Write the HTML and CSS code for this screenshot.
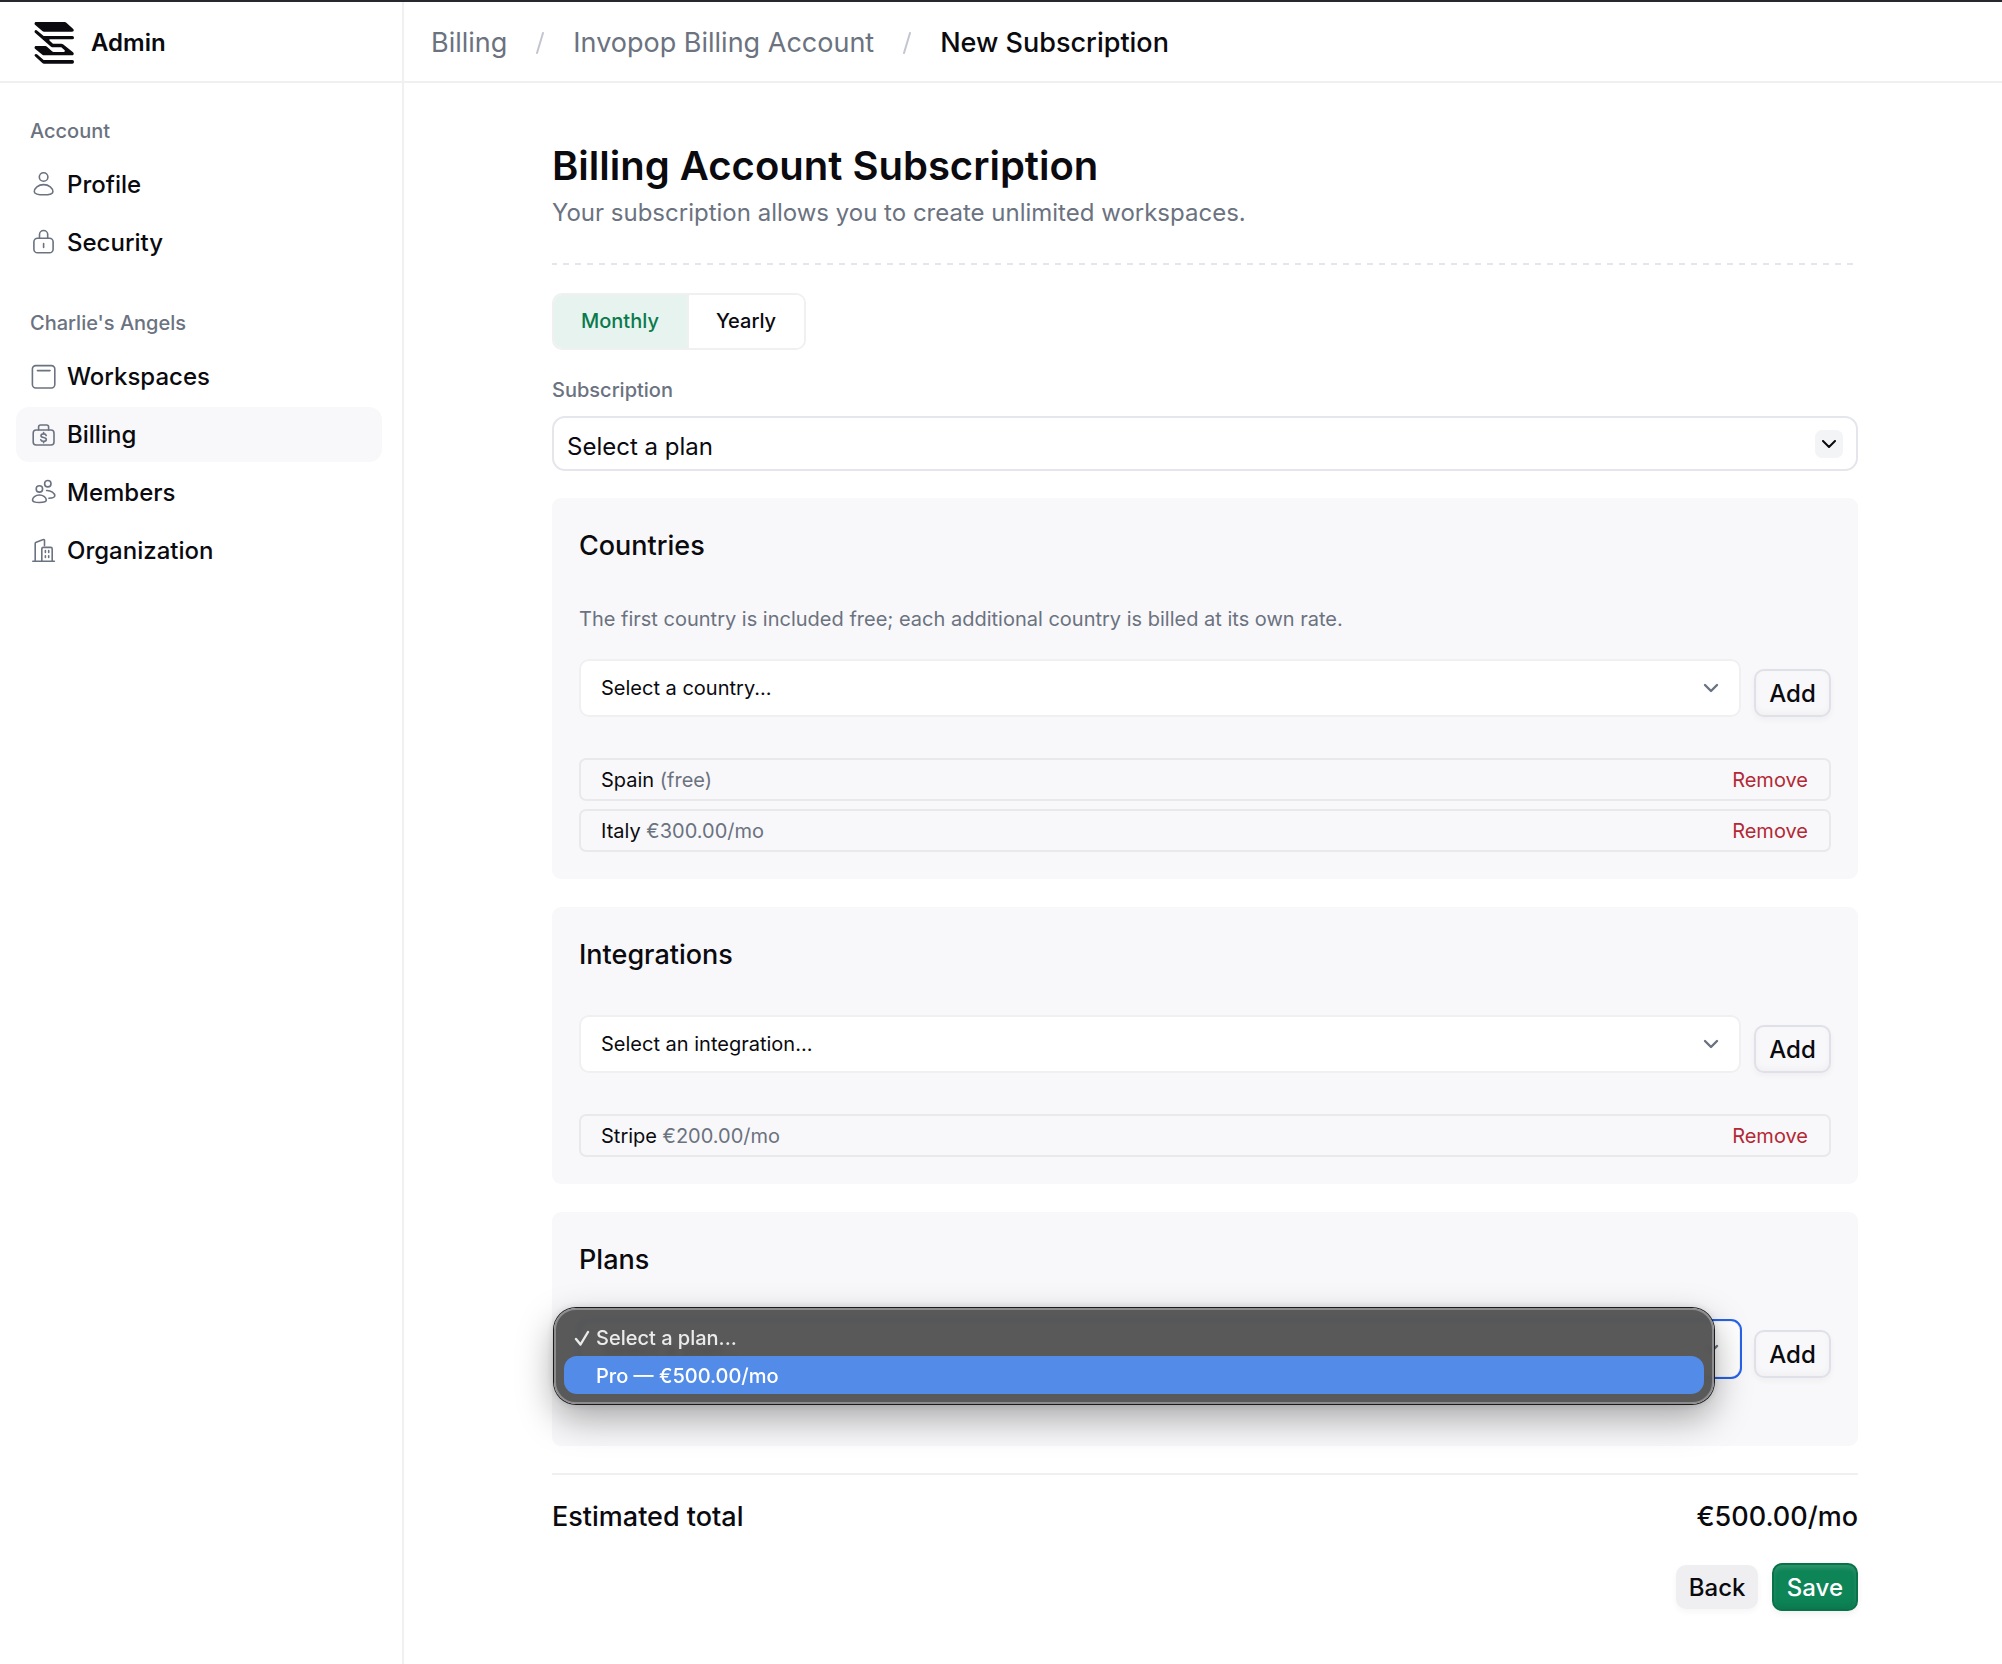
FILE: index.html
```html
<!DOCTYPE html>
<html lang="en">
<head>
<meta charset="utf-8">
<meta name="viewport" content="width=device-width, initial-scale=1">
<title>New Subscription</title>
<link rel="stylesheet" href="styles.css">
</head>
<body>
<div class="app">
  <aside class="sidebar">
    <div class="brand">
      <svg class="brand-logo" viewBox="102 60 120 129" aria-hidden="true">
        <path d="M107 63H194Q197 63 199 65L219 83Q223 87 220 91Q219 92 216 92H132Q129 92 127 90L105 71Q103 69 104 66Q105 63 107 63Z"/>
        <path d="M104 90Q106 86 110 88L131 105H217Q222 105 222 110Q222 115 217 115H149Q147 117 149 119L159 128H184Q187 128 189 130L219 154Q223 158 220 161Q219 163 216 163H132Q129 163 127 161L105 143Q103 141 104 138Q105 135 107 135H136Q139 135 141 137L156 151Q158 153 161 153H192Q196 152 194 148L184 139H160Q156 139 153 137L105 95Q103 93 104 90Z"/>
        <path d="M104 161Q107 157 111 160L131 177H217Q222 177 222 182Q222 188 217 188H132Q129 188 127 186L105 166Q103 164 104 161Z"/>
      </svg>
      <span class="brand-name">Admin</span>
    </div>
    <nav class="nav" aria-label="Main">
      <section class="nav-group">
        <h2 class="nav-label">Account</h2>
        <a class="nav-item" href="#profile">
          <svg class="icon" viewBox="0 0 27 27" aria-hidden="true"><circle cx="13.6" cy="6" r="4.3"/><path d="M13.6 13.6c5.4 0 9.3 3.7 9.3 7.1 0 2-3.7 3.1-9.3 3.1s-9.3-1.1-9.3-3.1c0-3.4 3.9-7.1 9.3-7.1z"/></svg>
          Profile
        </a>
        <a class="nav-item" href="#security">
          <svg class="icon" viewBox="0 0 27 27" aria-hidden="true"><rect x="3.9" y="9.2" width="19.2" height="14.6" rx="3.6"/><path d="M9.5 9.2V5.6a4.1 4.1 0 0 1 8.2 0v3.6M13.6 14.6v3.8"/></svg>
          Security
        </a>
      </section>
      <section class="nav-group">
        <h2 class="nav-label">Charlie's Angels</h2>
        <a class="nav-item" href="#workspaces">
          <svg class="icon" viewBox="0 0 27 27" aria-hidden="true"><rect x="2.4" y="2.6" width="22.4" height="22.4" rx="3.4"/><path d="M7.4 7.6h12.6"/></svg>
          Workspaces
        </a>
        <a class="nav-item nav-item-active" href="#billing" aria-current="page">
          <svg class="icon" viewBox="0 0 27 27" aria-hidden="true"><rect x="3.2" y="9" width="20.8" height="15" rx="3"/><path d="M8.6 9V6a2 2 0 0 1 2-2h6a2 2 0 0 1 2 2v3"/><path d="M16.2 14.4c-.3-1-1.3-1.5-2.6-1.5-1.5 0-2.6.6-2.6 1.8 0 2.6 5.3 1.1 5.3 3.8 0 1.2-1.2 1.8-2.7 1.8-1.4 0-2.5-.6-2.8-1.6M13.6 11.5v1.4M13.6 20.3v1.4"/></svg>
          Billing
        </a>
        <a class="nav-item" href="#members">
          <svg class="icon" viewBox="0 0 27 27" aria-hidden="true"><circle cx="9.4" cy="9.9" r="3.2"/><circle cx="17.8" cy="4.7" r="3.2"/><path d="M9.4 16c4 0 6.9 2.5 6.9 5 0 1.7-2.7 2.5-6.9 2.5s-6.9-.8-6.9-2.5c0-2.5 2.9-5 6.9-5zM16.6 11.5c4.6-.2 8.2 2.900 8.200 5.300 0 1.400-2.100 2.300-5.900 2.500"/></svg>
          Members
        </a>
        <a class="nav-item" href="#organization">
          <svg class="icon" viewBox="0 0 27 27" aria-hidden="true"><path d="M2.8 24.2h21.6M5.2 24.2V6.6a1.500 1.500 0 0 1 1-1.400l7.200-2.700a.8.8 0 0 1 1.100.7v5.200M11.800 24.200V11.900a1.500 1.500 0 0 1 1.500-1.500h7.400a1.500 1.500 0 0 1 1.500 1.500v12.300M15.400 13.600v1.800M18.700 13.600v1.800M15.400 18.700v1.800M18.700 18.700v1.800"/></svg>
          Organization
        </a>
      </section>
    </nav>
  </aside>

  <div class="page">
    <header class="topbar">
      <nav class="crumbs" aria-label="Breadcrumb">
        <a class="crumb" href="#billing">Billing</a>
        <svg class="crumb-sep" viewBox="0 0 8 22" aria-hidden="true"><path d="M7 1L1 21"/></svg>
        <a class="crumb" href="#account">Invopop Billing Account</a>
        <svg class="crumb-sep" viewBox="0 0 8 22" aria-hidden="true"><path d="M7 1L1 21"/></svg>
        <span class="crumb crumb-current" aria-current="page">New Subscription</span>
      </nav>
    </header>

    <main class="content">
      <div class="intro">
        <h1 class="title">Billing Account Subscription</h1>
        <p class="subtitle">Your subscription allows you to create unlimited workspaces.</p>
      </div>

      <div class="segmented" role="group" aria-label="Billing period">
        <button class="segment segment-on" type="button" aria-pressed="true">Monthly</button>
        <button class="segment" type="button" aria-pressed="false">Yearly</button>
      </div>

      <div class="field">
        <label class="field-label" for="subscription">Subscription</label>
        <div class="picker">
          <select class="picker-select picker-select-main" id="subscription"><option>Select a plan</option></select>
          <span class="picker-badge"><svg class="chevron-small" viewBox="0 0 14 8" aria-hidden="true"><path d="M1 1l6 6 6-6"/></svg></span>
        </div>
      </div>

      <div class="cards">
        <section class="card">
          <h2 class="card-title">Countries</h2>
          <p class="card-note">The first country is included free; each additional country is billed at its own rate.</p>
          <div class="adder">
            <div class="picker">
              <select class="picker-select" aria-label="Country"><option>Select a country...</option></select>
              <svg class="chevron" viewBox="0 0 16 10" aria-hidden="true"><path d="M2 2l6 6 6-6"/></svg>
            </div>
            <button class="button button-outline" type="button">Add</button>
          </div>
          <ul class="items">
            <li class="item"><span>Spain <span class="price">(free)</span></span><button class="remove" type="button">Remove</button></li>
            <li class="item"><span>Italy <span class="price">€300.00/mo</span></span><button class="remove" type="button">Remove</button></li>
          </ul>
        </section>

        <section class="card">
          <h2 class="card-title">Integrations</h2>
          <div class="adder">
            <div class="picker">
              <select class="picker-select" aria-label="Integration"><option>Select an integration...</option></select>
              <svg class="chevron" viewBox="0 0 16 10" aria-hidden="true"><path d="M2 2l6 6 6-6"/></svg>
            </div>
            <button class="button button-outline" type="button">Add</button>
          </div>
          <ul class="items">
            <li class="item"><span>Stripe <span class="price">€200.00/mo</span></span><button class="remove" type="button">Remove</button></li>
          </ul>
        </section>

        <section class="card">
          <h2 class="card-title">Plans</h2>
          <div class="adder">
            <div class="picker">
              <select class="picker-select picker-select-open" aria-label="Plan"><option>Select a plan...</option></select>
              <svg class="chevron" viewBox="0 0 16 10" aria-hidden="true"><path d="M2 2l6 6 6-6"/></svg>
              <ul class="menu" role="listbox" aria-label="Plan options">
                <li class="menu-option" role="option" aria-selected="true"><svg class="check" viewBox="0 0 16 16" aria-hidden="true"><path d="M2 9l4.500 5.500L14 2"/></svg>Select a plan...</li>
                <li class="menu-option menu-option-hover" role="option" aria-selected="false"><span class="check"></span>Pro — €500.00/mo</li>
              </ul>
            </div>
            <button class="button button-outline" type="button">Add</button>
          </div>
          <ul class="items"></ul>
        </section>
      </div>

      <div class="total"><span>Estimated total</span><span>€500.00/mo</span></div>
      <div class="actions">
        <button class="button button-soft" type="button">Back</button>
        <button class="button button-primary" type="submit">Save</button>
      </div>
    </main>
  </div>
</div>
</body>
</html>
```
FILE: styles.css
```css
:root {
  --ink: #0a0a0f;
  --muted: #6b7280;
  --line: #f0f0f1;
  --surface: #f8f8fa;
  --green: #0d8557;
  --small: 20px;
  --base: 24px;
  --large: 27px;
}

* { box-sizing: border-box; }

body {
  margin: 0;
  background: #fff;
  color: var(--ink);
  font-family: Inter, "Liberation Sans", sans-serif;
  font-size: var(--base);
  line-height: 32px;
}

h1, h2, p, ul { margin: 0; padding: 0; }
ul { list-style: none; }
a { color: inherit; text-decoration: none; }
button, select { margin: 0; font: inherit; color: inherit; }

.app {
  display: grid;
  grid-template-columns: 404px 1fr;
  min-height: 100vh;
  border-top: 2px solid #25282d;
}

/* Sidebar */
.sidebar { border-right: 2px solid var(--line); }

.brand, .topbar {
  display: flex;
  align-items: center;
  height: 81px;
  padding-top: 2px;
  border-bottom: 2px solid var(--line);
}
.brand { gap: 17px; padding-left: 34px; }
.brand-logo { width: 40px; height: 43px; fill: var(--ink); }
.brand-name { font-weight: 600; }

.nav {
  display: flex;
  flex-direction: column;
  gap: 38px;
  padding: 33px 20px 0 16px;
}
.nav-group { display: flex; flex-direction: column; gap: 3px; }
.nav-label {
  margin-bottom: 8px;
  padding-left: 14px;
  color: var(--muted);
  font-size: var(--small);
  font-weight: 500;
  line-height: 30px;
}
.nav-item {
  display: flex;
  align-items: center;
  gap: 10px;
  height: 55px;
  padding-left: 14px;
  border-radius: 13px;
  font-weight: 500;
}
.nav-item-active { background: var(--surface); }
.icon {
  width: 27px;
  height: 27px;
  fill: none;
  stroke: var(--muted);
  stroke-width: 1.6;
  stroke-linecap: round;
  stroke-linejoin: round;
}

/* Top bar */
.topbar { padding-left: 27px; }
.crumbs {
  display: flex;
  align-items: center;
  gap: 29px;
  font-size: var(--large);
}
.crumb { color: var(--muted); }
.crumb-current { color: var(--ink); font-weight: 500; }
.crumb-sep {
  width: 8px;
  height: 22px;
  fill: none;
  stroke: #c3c6d1;
  stroke-width: 2;
  stroke-linecap: round;
}

/* Content */
.content { padding: 59px 144px 52px 148px; }
.intro {
  display: grid;
  gap: 7px;
  padding-bottom: 36px;
  background: repeating-linear-gradient(90deg, #e5e6eb 0 5px, transparent 5px 11px, #e5e6eb 11px 12px) left bottom / 100% 2px no-repeat;
}
.title { font-size: 40px; font-weight: 600; line-height: 48px; }
.subtitle { color: var(--muted); }

.segmented {
  display: inline-flex;
  height: 57px;
  margin: 28px 0 25px;
  overflow: hidden;
  border: 2px solid var(--line);
  border-radius: 10px;
  vertical-align: top;
}
.segment {
  padding: 0 28px 2px 27px;
  border: 0;
  background: #fff;
  font-size: var(--small);
  font-weight: 500;
}
.segment-on { border-right: 2px solid var(--line); background: #e7f3ef; color: #0a7a4c; }

.field { display: grid; gap: 11px; margin-bottom: 27px; }
.field-label { color: var(--muted); font-size: var(--small); font-weight: 500; line-height: 30px; }

.picker { position: relative; flex: 1; }
.picker-select {
  display: block;
  width: 100%;
  height: 58px;
  padding: 0 48px 0 20px;
  border: 2px solid var(--line);
  border-radius: 10px;
  background: #fff;
  font-size: var(--small);
  appearance: none;
}
.picker-select-main {
  height: 55px;
  padding: 6px 48px 0 13px;
  border-color: #e5e6eb;
  border-radius: 13px;
  font-size: var(--base);
}
.picker-select-open { outline: 2px solid #2563eb; outline-offset: -1px; }
.picker-badge {
  position: absolute;
  top: 14px;
  right: 15px;
  display: grid;
  place-items: center;
  width: 28px;
  height: 28px;
  border-radius: 7px;
  background: #f3f4f6;
  pointer-events: none;
}
.chevron, .chevron-small { fill: none; stroke-linecap: round; stroke-linejoin: round; }
.chevron-small { width: 14px; height: 8px; stroke: var(--ink); stroke-width: 2; }
.chevron {
  position: absolute;
  top: 24px;
  right: 22px;
  width: 16px;
  height: 10px;
  stroke: var(--muted);
  stroke-width: 2.4;
  pointer-events: none;
}

/* Cards */
.cards { display: grid; gap: 28px; }
.card { padding: 28px 27px 27px; border-radius: 9px; background: var(--surface); }
.card-title { margin-bottom: 40px; font-size: var(--large); font-weight: 500; line-height: 40px; }
.card-note { padding-top: 1px; margin-bottom: 28px; color: var(--muted); font-size: var(--small); line-height: 24px; }
.adder { display: flex; align-items: flex-end; gap: 13px; }

.items { display: grid; gap: 8px; margin-top: 41px; font-size: var(--small); }
.item {
  display: flex;
  align-items: center;
  justify-content: space-between;
  height: 43px;
  padding: 0 21px 0 20px;
  border: 2px solid #e9e9ec;
  border-radius: 7px;
}
.price { color: var(--muted); }
.remove { padding: 0; border: 0; background: none; color: #b42835; }

/* Open option list */
.menu {
  position: absolute;
  z-index: 1;
  top: -12px;
  right: 27px;
  left: -25px;
  padding: 8px;
  border: 2px solid #8d8d90;
  border-radius: 22px;
  background: rgba(80, 80, 80, 0.95);
  box-shadow: 0 0 0 1px #1c1c1c, 0 14px 36px rgba(0, 0, 0, 0.34), 0 0 8px rgba(0, 0, 0, 0.16);
  backdrop-filter: blur(3px);
  color: #ebebeb;
  font-size: var(--small);
  font-weight: 500;
}
.menu-option {
  display: flex;
  align-items: center;
  gap: 6px;
  height: 38px;
  padding: 2px 0 0 10px;
  border-radius: 13px;
}
.menu-option-hover { background: #538ce8; color: #fff; }
.check {
  width: 16px;
  height: 16px;
  fill: none;
  stroke: currentColor;
  stroke-width: 2.4;
  stroke-linecap: round;
  stroke-linejoin: round;
}

/* Total and actions */
.total {
  display: flex;
  justify-content: space-between;
  margin-top: 27px;
  padding-top: 22px;
  border-top: 2px solid var(--line);
  font-size: var(--large);
  font-weight: 500;
  line-height: 40px;
}
.actions {
  display: flex;
  align-items: center;
  justify-content: flex-end;
  gap: 14px;
  margin-top: 26px;
}
.button {
  height: 48px;
  padding: 2px 13px 0;
  border: 2px solid transparent;
  border-radius: 10px;
  font-weight: 500;
}
.button-outline {
  width: 77px;
  border-color: #e0e0e8;
  background: var(--surface);
  box-shadow: inset 0 -3px 6px rgba(0, 0, 0, 0.03), 0 3px 6px rgba(0, 0, 0, 0.04);
}
.button-soft { width: 82px; height: 44px; border: 0; background: #efeff2; box-shadow: 0 3px 6px rgba(0, 0, 0, 0.04); }
.button-primary {
  border-color: #0a7249;
  background: var(--green);
  box-shadow: inset 0 3px 4px rgba(255, 255, 255, 0.14), inset 0 -4px 6px rgba(0, 0, 0, 0.1), 0 3px 6px rgba(0, 0, 0, 0.06);
  color: #fff;
}
```
